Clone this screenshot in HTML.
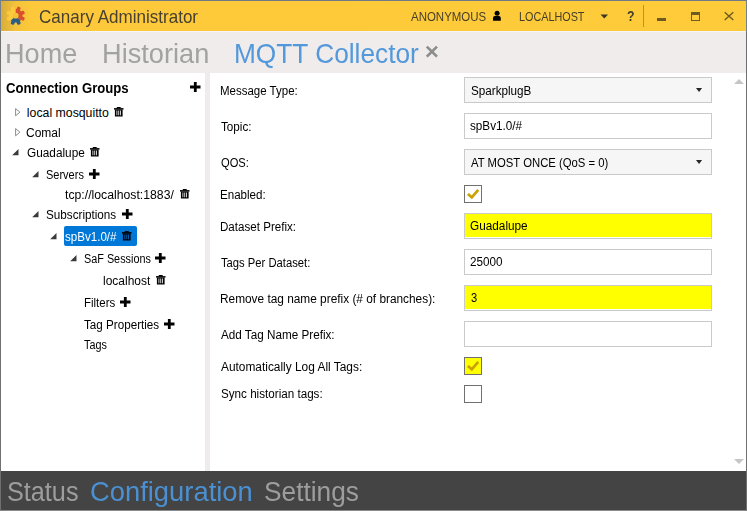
<!DOCTYPE html>
<html><head><meta charset="utf-8">
<style>
html,body{margin:0;padding:0;}
body{width:747px;height:511px;overflow:hidden;position:relative;background:#f0ecec;font-family:"Liberation Sans",sans-serif;}
.t{position:absolute;white-space:pre;line-height:0;transform-origin:0 0;font-family:"Liberation Sans",sans-serif;}
.abs{position:absolute;}
#border{position:absolute;left:0;top:0;width:745px;height:509px;border:1px solid #707070;border-top-color:#6f7a86;border-bottom-color:#8a8a8a;z-index:50;pointer-events:none;}
#bl{position:absolute;left:0;top:0;width:1px;height:31px;background:#73808c;z-index:51}
#br{position:absolute;left:746px;top:0;width:1px;height:31px;background:#73808c;z-index:51}
#title{position:absolute;left:1px;top:1px;width:745px;height:30px;background:linear-gradient(90deg,#d8ad3c 0px,#f2c23a 14px,#fdc93a 30px,#fecb3a 100%);}
#tabs{position:absolute;left:1px;top:31px;width:745px;height:42px;background:#f0ecec;}
#lp{position:absolute;left:1px;top:73px;width:204px;height:398px;background:#fff;}
#split{position:absolute;left:205px;top:73px;width:5px;height:398px;background:#f0ecec;}
#rp{position:absolute;left:210px;top:73px;width:536px;height:398px;background:#fff;}
#status{position:absolute;left:1px;top:471px;width:745px;height:39px;background:#444;border-bottom:0;}
#tline{position:absolute;left:1px;top:31px;width:745px;height:1px;background:#f5f4f6;}
.box{position:absolute;left:464px;width:246px;border:1px solid #cacaca;background:#fff;}
.combo{background:#f6f6f6;}
.yel{background:#fff;}
.yel::before{content:"";position:absolute;left:0;top:0;right:0;bottom:1px;background:#ffff00;}
.chk{position:absolute;left:464px;width:16px;height:16px;border:1px solid #707070;background:#fff;}
</style></head><body>
<div id="title"></div>
<div id="tabs"></div>
<div id="lp"></div>
<div id="split"></div>
<div id="rp"></div>
<div id="status"></div><div id="tline"></div>

<!-- logo -->
<svg class="abs" style="left:5.4px;top:5.1px" width="21.4" height="21.4" viewBox="0 0 20 20">
  <defs>
    <mask id="gm" maskUnits="userSpaceOnUse" x="0" y="0" width="20" height="20">
      <rect width="20" height="20" fill="#000"/>
      <circle cx="10" cy="10" r="6.4" fill="#fff"/>
      <g fill="#fff"><rect x="8.3" y="1.2" width="3.4" height="5" rx="1.1" transform="rotate(67.5 10 10)"/><rect x="8.3" y="1.2" width="3.4" height="5" rx="1.1" transform="rotate(22.5 10 10)"/><rect x="8.3" y="1.2" width="3.4" height="5" rx="1.1" transform="rotate(-22.5 10 10)"/><rect x="8.3" y="1.2" width="3.4" height="5" rx="1.1" transform="rotate(-67.5 10 10)"/><rect x="8.3" y="1.2" width="3.4" height="5" rx="1.1" transform="rotate(-112.5 10 10)"/><rect x="8.3" y="1.2" width="3.4" height="5" rx="1.1" transform="rotate(-157.5 10 10)"/><rect x="8.3" y="1.2" width="3.4" height="5" rx="1.1" transform="rotate(-202.5 10 10)"/><rect x="8.3" y="1.2" width="3.4" height="5" rx="1.1" transform="rotate(-247.5 10 10)"/></g>
      <circle cx="10" cy="10" r="2.7" fill="#000"/>
    </mask>
  </defs>
  <g mask="url(#gm)">
    <path d="M10 10 L10 -10 L-8.48 2.35 L-4.14 24.14 Z" fill="#fdcb3a"/>
    <path d="M10 10 L10 -10 L28.48 2.35 L24.14 24.14 Z" fill="#d9512c"/>
    <path d="M10 10 L24.14 24.14 L-4.14 24.14 Z" fill="#2b5e87"/>
  </g>
</svg>

<!-- person icon -->
<svg class="abs" style="left:492px;top:10px" width="11" height="12" viewBox="0 0 11 12">
  <circle cx="5.1" cy="3.3" r="2.5" fill="#000"/>
  <path d="M1 10.7 L1 7.9 Q1 5.9 3 5.9 L6.8 5.9 Q8.8 5.9 8.8 7.9 L8.8 10.7 Z" fill="#000"/>
</svg>
<!-- dropdown arrow title -->
<svg class="abs" style="left:600px;top:14px" width="9" height="6" viewBox="0 0 9 6"><path d="M0.5 0.5 L8 0.5 L4.25 4.5 Z" fill="#3d3622"/></svg>
<!-- separator -->
<div class="abs" style="left:643px;top:5px;width:1px;height:22px;background:#b89530"></div>
<!-- min -->
<div class="abs" style="left:657px;top:18px;width:9px;height:3px;background:#6e5b20"></div>
<!-- max -->
<div class="abs" style="left:691px;top:12px;width:7px;height:5px;border:1px solid #6e5b20;border-top:3px solid #6e5b20;"></div>
<!-- close -->
<svg class="abs" style="left:723px;top:11px" width="12" height="10" viewBox="0 0 12 10"><path d="M1.7 1.2 L10.3 8.9 M10.3 1.2 L1.7 8.9" stroke="#6e5b20" stroke-width="1.4"/></svg>

<!-- tab close x -->
<svg class="abs" style="left:424.5px;top:45px" width="14" height="13" viewBox="0 0 14 13"><path d="M1.8 1.6 L12 11.6 M12 1.6 L1.8 11.6" stroke="#8c8c8c" stroke-width="2.7"/></svg>

<!-- plus icons -->


<!-- selection -->
<div class="abs" style="left:64px;top:226px;width:73px;height:20px;background:#0078d7;border-radius:2px"></div>
<svg class="abs" style="left:190.4px;top:82.0px" width="11" height="10" viewBox="0 0 11 10"><path d="M5.3 0 V10 M0 5 H10.5" stroke="#000" stroke-width="2.8"/></svg>
<svg class="abs" style="left:89.1px;top:168.8px" width="11" height="10" viewBox="0 0 11 10"><path d="M5.3 0 V10 M0 5 H10.5" stroke="#000" stroke-width="2.8"/></svg>
<svg class="abs" style="left:121.7px;top:208.6px" width="11" height="10" viewBox="0 0 11 10"><path d="M5.3 0 V10 M0 5 H10.5" stroke="#000" stroke-width="2.8"/></svg>
<svg class="abs" style="left:155.2px;top:252.6px" width="11" height="10" viewBox="0 0 11 10"><path d="M5.3 0 V10 M0 5 H10.5" stroke="#000" stroke-width="2.8"/></svg>
<svg class="abs" style="left:120.4px;top:297.0px" width="11" height="10" viewBox="0 0 11 10"><path d="M5.3 0 V10 M0 5 H10.5" stroke="#000" stroke-width="2.8"/></svg>
<svg class="abs" style="left:164.0px;top:319.3px" width="11" height="10" viewBox="0 0 11 10"><path d="M5.3 0 V10 M0 5 H10.5" stroke="#000" stroke-width="2.8"/></svg>
<svg class="abs" style="left:114.0px;top:107.1px" width="10" height="10" viewBox="0 0 10 10"><rect x="2.8" y="0" width="3.9" height="1.3" fill="#000"/><rect x="0" y="1.1" width="9.5" height="1.5" fill="#000"/><path fill-rule="evenodd" d="M0.9 2.4 H8.6 V9.4 H0.9 Z M2.5 3.6 V8.2 H3.3 V3.6 Z M4.35 3.6 V8.2 H5.15 V3.6 Z M6.2 3.6 V8.2 H7.0 V3.6 Z" fill="#000"/></svg>
<svg class="abs" style="left:89.8px;top:146.8px" width="10" height="10" viewBox="0 0 10 10"><rect x="2.8" y="0" width="3.9" height="1.3" fill="#000"/><rect x="0" y="1.1" width="9.5" height="1.5" fill="#000"/><path fill-rule="evenodd" d="M0.9 2.4 H8.6 V9.4 H0.9 Z M2.5 3.6 V8.2 H3.3 V3.6 Z M4.35 3.6 V8.2 H5.15 V3.6 Z M6.2 3.6 V8.2 H7.0 V3.6 Z" fill="#000"/></svg>
<svg class="abs" style="left:180.0px;top:188.5px" width="10" height="10" viewBox="0 0 10 10"><rect x="2.8" y="0" width="3.9" height="1.3" fill="#000"/><rect x="0" y="1.1" width="9.5" height="1.5" fill="#000"/><path fill-rule="evenodd" d="M0.9 2.4 H8.6 V9.4 H0.9 Z M2.5 3.6 V8.2 H3.3 V3.6 Z M4.35 3.6 V8.2 H5.15 V3.6 Z M6.2 3.6 V8.2 H7.0 V3.6 Z" fill="#000"/></svg>
<svg class="abs" style="left:121.9px;top:230.8px" width="10" height="10" viewBox="0 0 10 10"><rect x="2.8" y="0" width="3.9" height="1.3" fill="#000"/><rect x="0" y="1.1" width="9.5" height="1.5" fill="#000"/><path fill-rule="evenodd" d="M0.9 2.4 H8.6 V9.4 H0.9 Z M2.5 3.6 V8.2 H3.3 V3.6 Z M4.35 3.6 V8.2 H5.15 V3.6 Z M6.2 3.6 V8.2 H7.0 V3.6 Z" fill="#000"/></svg>
<svg class="abs" style="left:155.6px;top:275.0px" width="10" height="10" viewBox="0 0 10 10"><rect x="2.8" y="0" width="3.9" height="1.3" fill="#000"/><rect x="0" y="1.1" width="9.5" height="1.5" fill="#000"/><path fill-rule="evenodd" d="M0.9 2.4 H8.6 V9.4 H0.9 Z M2.5 3.6 V8.2 H3.3 V3.6 Z M4.35 3.6 V8.2 H5.15 V3.6 Z M6.2 3.6 V8.2 H7.0 V3.6 Z" fill="#000"/></svg>
<svg class="abs" style="left:14.6px;top:108.2px" width="6" height="9" viewBox="0 0 6 9"><path d="M0.6 0.6 L4.9 4.2 L0.6 7.8 Z" fill="none" stroke="#8c8c8c" stroke-width="1"/></svg>
<svg class="abs" style="left:14.6px;top:128.1px" width="6" height="9" viewBox="0 0 6 9"><path d="M0.6 0.6 L4.9 4.2 L0.6 7.8 Z" fill="none" stroke="#8c8c8c" stroke-width="1"/></svg>
<svg class="abs" style="left:12.4px;top:148.8px" width="7" height="7" viewBox="0 0 7 7"><path d="M6.5 0 L6.5 6.3 L0.2 6.3 Z" fill="#3a3a3a"/></svg>
<svg class="abs" style="left:31.6px;top:171.2px" width="7" height="7" viewBox="0 0 7 7"><path d="M6.5 0 L6.5 6.3 L0.2 6.3 Z" fill="#3a3a3a"/></svg>
<svg class="abs" style="left:31.6px;top:211.0px" width="7" height="7" viewBox="0 0 7 7"><path d="M6.5 0 L6.5 6.3 L0.2 6.3 Z" fill="#3a3a3a"/></svg>
<svg class="abs" style="left:50.2px;top:233.0px" width="7" height="7" viewBox="0 0 7 7"><path d="M6.5 0 L6.5 6.3 L0.2 6.3 Z" fill="#3a3a3a"/></svg>
<svg class="abs" style="left:69.6px;top:255.0px" width="7" height="7" viewBox="0 0 7 7"><path d="M6.5 0 L6.5 6.3 L0.2 6.3 Z" fill="#3a3a3a"/></svg>


<!-- form boxes -->
<div class="box combo" style="top:77px;height:24px"></div>
<div class="box" style="top:113px;height:24px"></div>
<div class="box combo" style="top:149px;height:24px"></div>
<div class="chk" style="top:185px"></div>
<div class="box yel" style="top:213px;height:24px"></div>
<div class="box" style="top:249px;height:24px"></div>
<div class="box yel" style="top:285px;height:24px"></div>
<div class="box" style="top:321px;height:24px"></div>
<div class="chk" style="top:357px;background:#ffff00"></div>
<div class="chk" style="top:385px"></div>

<!-- combo arrows -->
<svg class="abs" style="left:695px;top:87px" width="9" height="6" viewBox="0 0 9 6"><path d="M1 1.1 L7.1 1.1 L4.05 4.9 Z" fill="#262626"/></svg>
<svg class="abs" style="left:695px;top:159px" width="9" height="6" viewBox="0 0 9 6"><path d="M1 1.1 L7.1 1.1 L4.05 4.9 Z" fill="#262626"/></svg>

<!-- checks -->
<svg class="abs" style="left:464px;top:185px" width="18" height="18" viewBox="0 0 18 18"><path d="M3.9 8.9 L7.8 12.3 L14.2 4.9" stroke="#c9a200" stroke-width="2.7" fill="none"/></svg>
<svg class="abs" style="left:464px;top:357px" width="18" height="18" viewBox="0 0 18 18"><path d="M3.9 8.9 L7.8 12.3 L14.2 4.9" stroke="#c9a200" stroke-width="2.7" fill="none"/></svg>

<!-- scrollbar arrows -->
<svg class="abs" style="left:733px;top:78px" width="12" height="7" viewBox="0 0 12 7"><path d="M1 6 L11 6 L6 1 Z" fill="#c6c6c6"/></svg>
<svg class="abs" style="left:733px;top:458px" width="12" height="7" viewBox="0 0 12 7"><path d="M1 1 L11 1 L6 6 Z" fill="#c6c6c6"/></svg>

<div class="t" style="left:38.86px;top:17px;font-size:18.2px;font-weight:400;color:#484030;transform:scaleX(0.9365);">Canary Administrator</div>
<div class="t" style="left:411.20px;top:17px;font-size:11.9px;font-weight:400;color:#463e28;transform:scaleX(0.9652);">ANONYMOUS</div>
<div class="t" style="left:519.39px;top:17px;font-size:11.9px;font-weight:400;color:#463e28;transform:scaleX(0.9088);">LOCALHOST</div>
<div class="t" style="left:627.39px;top:16px;font-size:15.2px;font-weight:700;color:#463e28;transform:scaleX(0.8129);">?</div>
<div class="t" style="left:4.73px;top:54px;font-size:26.9px;font-weight:400;color:#a2a2a2;transform:scaleX(1.0081);">Home</div>
<div class="t" style="left:101.83px;top:54px;font-size:26.9px;font-weight:400;color:#a2a2a2;transform:scaleX(1.0108);">Historian</div>
<div class="t" style="left:233.70px;top:54px;font-size:26.9px;font-weight:400;color:#5298da;transform:scaleX(0.9764);">MQTT Collector</div>
<div class="t" style="left:5.93px;top:88px;font-size:13.9px;font-weight:700;color:#000;transform:scaleX(0.9463);">Connection Groups</div>
<div class="t" style="left:26.85px;top:113px;font-size:12.3px;font-weight:400;color:#000;">local mosquitto</div>
<div class="t" style="left:26.37px;top:133px;font-size:12.3px;font-weight:400;color:#000;transform:scaleX(0.9765);">Comal</div>
<div class="t" style="left:26.58px;top:153px;font-size:12.3px;font-weight:400;color:#000;transform:scaleX(0.9600);">Guadalupe</div>
<div class="t" style="left:46.15px;top:175px;font-size:12.3px;font-weight:400;color:#000;transform:scaleX(0.8940);">Servers</div>
<div class="t" style="left:65.25px;top:195px;font-size:12.3px;font-weight:400;color:#000;transform:scaleX(0.9954);">tcp://localhost:1883/</div>
<div class="t" style="left:46.12px;top:215px;font-size:12.3px;font-weight:400;color:#000;transform:scaleX(0.9507);">Subscriptions</div>
<div class="t" style="left:65.03px;top:237px;font-size:12.3px;font-weight:400;color:#fff;transform:scaleX(0.9419);">spBv1.0/#</div>
<div class="t" style="left:83.76px;top:259px;font-size:12.3px;font-weight:400;color:#000;transform:scaleX(0.8813);">SaF Sessions</div>
<div class="t" style="left:103.07px;top:281px;font-size:12.3px;font-weight:400;color:#000;transform:scaleX(0.9738);">localhost</div>
<div class="t" style="left:84.07px;top:303px;font-size:12.3px;font-weight:400;color:#000;transform:scaleX(0.9312);">Filters</div>
<div class="t" style="left:84.26px;top:325px;font-size:12.3px;font-weight:400;color:#000;transform:scaleX(0.9478);">Tag Properties</div>
<div class="t" style="left:84.28px;top:345px;font-size:12.3px;font-weight:400;color:#000;transform:scaleX(0.8792);">Tags</div>
<div class="t" style="left:220.07px;top:91px;font-size:12.3px;font-weight:400;color:#000;transform:scaleX(0.9346);">Message Type:</div>
<div class="t" style="left:220.76px;top:127px;font-size:12.3px;font-weight:400;color:#000;transform:scaleX(0.9496);">Topic:</div>
<div class="t" style="left:220.55px;top:163px;font-size:12.3px;font-weight:400;color:#000;transform:scaleX(0.9069);">QOS:</div>
<div class="t" style="left:220.06px;top:195px;font-size:12.3px;font-weight:400;color:#000;transform:scaleX(0.9419);">Enabled:</div>
<div class="t" style="left:220.06px;top:227px;font-size:12.3px;font-weight:400;color:#000;transform:scaleX(0.9427);">Dataset Prefix:</div>
<div class="t" style="left:220.77px;top:263px;font-size:12.3px;font-weight:400;color:#000;transform:scaleX(0.9132);">Tags Per Dataset:</div>
<div class="t" style="left:220.04px;top:299px;font-size:12.3px;font-weight:400;color:#000;transform:scaleX(0.9636);">Remove tag name prefix (# of branches):</div>
<div class="t" style="left:221.00px;top:335px;font-size:12.3px;font-weight:400;color:#000;transform:scaleX(0.9514);">Add Tag Name Prefix:</div>
<div class="t" style="left:221.00px;top:367px;font-size:12.3px;font-weight:400;color:#000;transform:scaleX(0.9669);">Automatically Log All Tags:</div>
<div class="t" style="left:220.53px;top:394px;font-size:12.3px;font-weight:400;color:#000;transform:scaleX(0.9475);">Sync historian tags:</div>
<div class="t" style="left:471.23px;top:91px;font-size:12.3px;font-weight:400;color:#000;transform:scaleX(0.9488);">SparkplugB</div>
<div class="t" style="left:470.32px;top:126px;font-size:12.3px;font-weight:400;color:#000;transform:scaleX(0.9512);">spBv1.0/#</div>
<div class="t" style="left:471.40px;top:163px;font-size:12.3px;font-weight:400;color:#000;transform:scaleX(0.9199);">AT MOST ONCE (QoS = 0)</div>
<div class="t" style="left:470.28px;top:226px;font-size:12.3px;font-weight:400;color:#000;transform:scaleX(0.9583);">Guadalupe</div>
<div class="t" style="left:470.12px;top:262px;font-size:12.3px;font-weight:400;color:#000;transform:scaleX(0.9504);">25000</div>
<div class="t" style="left:470.55px;top:298px;font-size:12.3px;font-weight:400;color:#000;transform:scaleX(0.9043);">3</div>
<div class="t" style="left:6.83px;top:492px;font-size:26.9px;font-weight:400;color:#9d9d9d;transform:scaleX(0.9378);">Status</div>
<div class="t" style="left:89.97px;top:492px;font-size:26.9px;font-weight:400;color:#4a90d2;transform:scaleX(1.0175);">Configuration</div>
<div class="t" style="left:264.38px;top:492px;font-size:26.9px;font-weight:400;color:#9d9d9d;transform:scaleX(0.9768);">Settings</div>
<div id="border"></div><div id="bl"></div><div id="br"></div>
</body></html>
